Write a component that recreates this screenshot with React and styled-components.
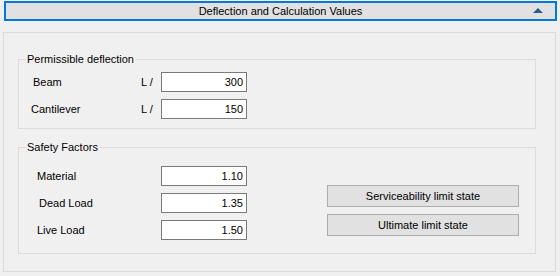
import styled, { createGlobalStyle } from 'styled-components'

const GlobalStyle = createGlobalStyle`
  * { box-sizing: border-box; }
  body {
    margin: 0;
    background: #f0f0f0;
    font-family: 'Liberation Sans', Arial, sans-serif;
    font-size: 11px;
    color: #000;
  }
`

const Header = styled.div`
  margin: 1px 0 0 4px;
  width: 553px;
  height: 20px;
  border: 2px solid #0078d7;
  background: #e1e1e1;
  display: grid;
  grid-template-columns: 1fr auto 1fr;
  align-items: center;
  padding-right: 12px;
`

const HeaderTitle = styled.span`
  grid-column: 2;
  padding-left: 12px;
`

const Arrow = styled.span`
  justify-self: end;
  width: 0;
  height: 0;
  border-left: 5px solid transparent;
  border-right: 5px solid transparent;
  border-bottom: 5px solid #2b5d91;
  margin-top: -1px;
`

const Panel = styled.div`
  margin: 11px 0 0 3px;
  width: 553px;
  height: 240px;
  border: 1px solid #dadada;
  padding: 26px 0 0 14px;
`

const Group = styled.div`
  position: relative;
  width: 518px;
  height: ${p => p.$height}px;
  margin-top: ${p => p.$top || 0}px;
  border: 1px solid #dcdcdc;
  padding-top: ${p => p.$padTop}px;
  display: flex;
`

const Legend = styled.span`
  position: absolute;
  top: -8px;
  left: 7px;
  padding: 0 2px 0 1px;
  background: #f0f0f0;
  line-height: 14px;
`

const Rows = styled.div`
  display: flex;
  flex-direction: column;
  gap: ${p => p.$gap}px;
`

const Row = styled.div`
  display: grid;
  grid-template-columns: 122px 20px 86px;
  align-items: center;
  height: 20px;
`

const Label = styled.span`
  padding-left: ${p => p.$indent}px;
`

const Unit = styled.span`
  grid-column: 2;
`

const Field = styled.input`
  grid-column: 3;
  width: 86px;
  height: 20px;
  border: 1px solid #7a7a7a;
  background: #fff;
  text-align: right;
  padding: 0 3px 0 2px;
  font: inherit;
  color: #000;
  outline: none;
`

const Buttons = styled.div`
  display: flex;
  flex-direction: column;
  gap: 7px;
  margin: 19px 0 0 80px;
`

const Button = styled.button`
  width: 192px;
  height: 22px;
  border: 1px solid #adadad;
  background: #e1e1e1;
  font: inherit;
  color: #000;
  padding: 0 0 1px;
`

const deflection = [
  { label: 'Beam', indent: 14, value: '300' },
  { label: 'Cantilever', indent: 12, value: '150' },
]

const factors = [
  { label: 'Material', indent: 18, value: '1.10' },
  { label: 'Dead Load', indent: 20, value: '1.35' },
  { label: 'Live Load', indent: 18, value: '1.50' },
]

export default function App() {
  return (
    <>
      <GlobalStyle />
      <Header>
        <HeaderTitle>Deflection and Calculation Values</HeaderTitle>
        <Arrow />
      </Header>
      <Panel>
        <Group $height={70} $padTop={12}>
          <Legend>Permissible deflection</Legend>
          <Rows $gap={7}>
            {deflection.map(r => (
              <Row key={r.label}>
                <Label $indent={r.indent}>{r.label}</Label>
                <Unit>L /</Unit>
                <Field readOnly defaultValue={r.value} />
              </Row>
            ))}
          </Rows>
        </Group>
        <Group $height={107} $top={18} $padTop={18}>
          <Legend>Safety Factors</Legend>
          <Rows $gap={7}>
            {factors.map(r => (
              <Row key={r.label}>
                <Label $indent={r.indent}>{r.label}</Label>
                <Field readOnly defaultValue={r.value} />
              </Row>
            ))}
          </Rows>
          <Buttons>
            <Button>Serviceability limit state</Button>
            <Button>Ultimate limit state</Button>
          </Buttons>
        </Group>
      </Panel>
    </>
  )
}
